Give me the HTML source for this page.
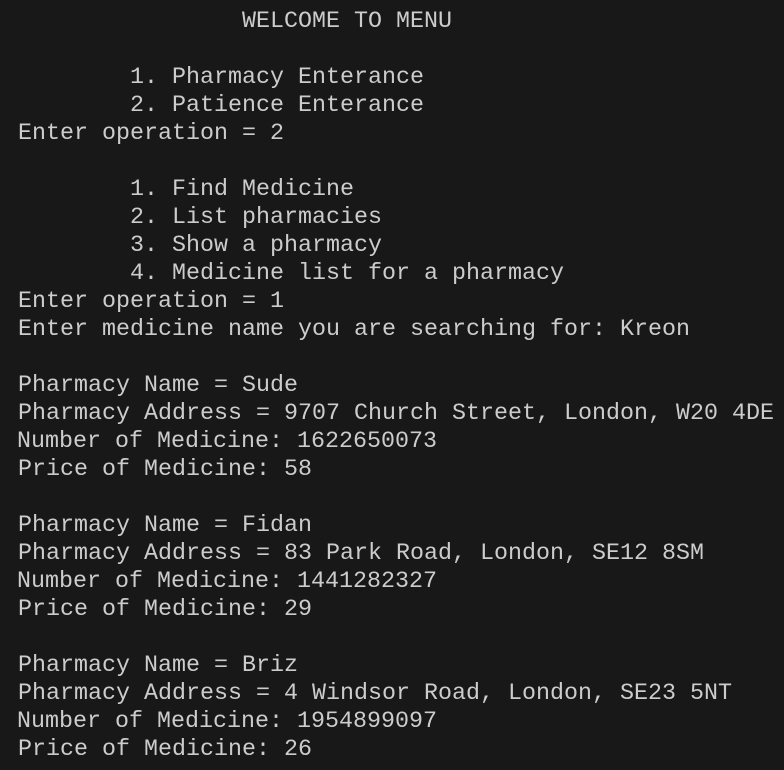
<!DOCTYPE html>
<html><head><style>
html,body{margin:0;padding:0;background:#181818;width:784px;height:770px;overflow:hidden}
pre{margin:0;position:absolute;left:18px;top:8px;font-family:"Liberation Mono",monospace;font-size:23.33px;line-height:28px;color:#cccccc}
.n{margin-left:-1px}
</style></head><body>
<pre>                WELCOME TO MENU

        1. Pharmacy Enterance
        2. Patience Enterance
Enter operation = 2

        1. Find Medicine
        2. List pharmacies
        3. Show a pharmacy
        4. Medicine list for a pharmacy
Enter operation = 1
Enter medicine name you are searching for: Kreon

Pharmacy Name = Sude
Pharmacy Address = 9707 Church Street, London, W20 4DE
<span class="n">Number of Medicine: 1622650073</span>
Price of Medicine: 58

Pharmacy Name = Fidan
Pharmacy Address = 83 Park Road, London, SE12 8SM
<span class="n">Number of Medicine: 1441282327</span>
Price of Medicine: 29

Pharmacy Name = Briz
Pharmacy Address = 4 Windsor Road, London, SE23 5NT
<span class="n">Number of Medicine: 1954899097</span>
Price of Medicine: 26</pre>
</body></html>
